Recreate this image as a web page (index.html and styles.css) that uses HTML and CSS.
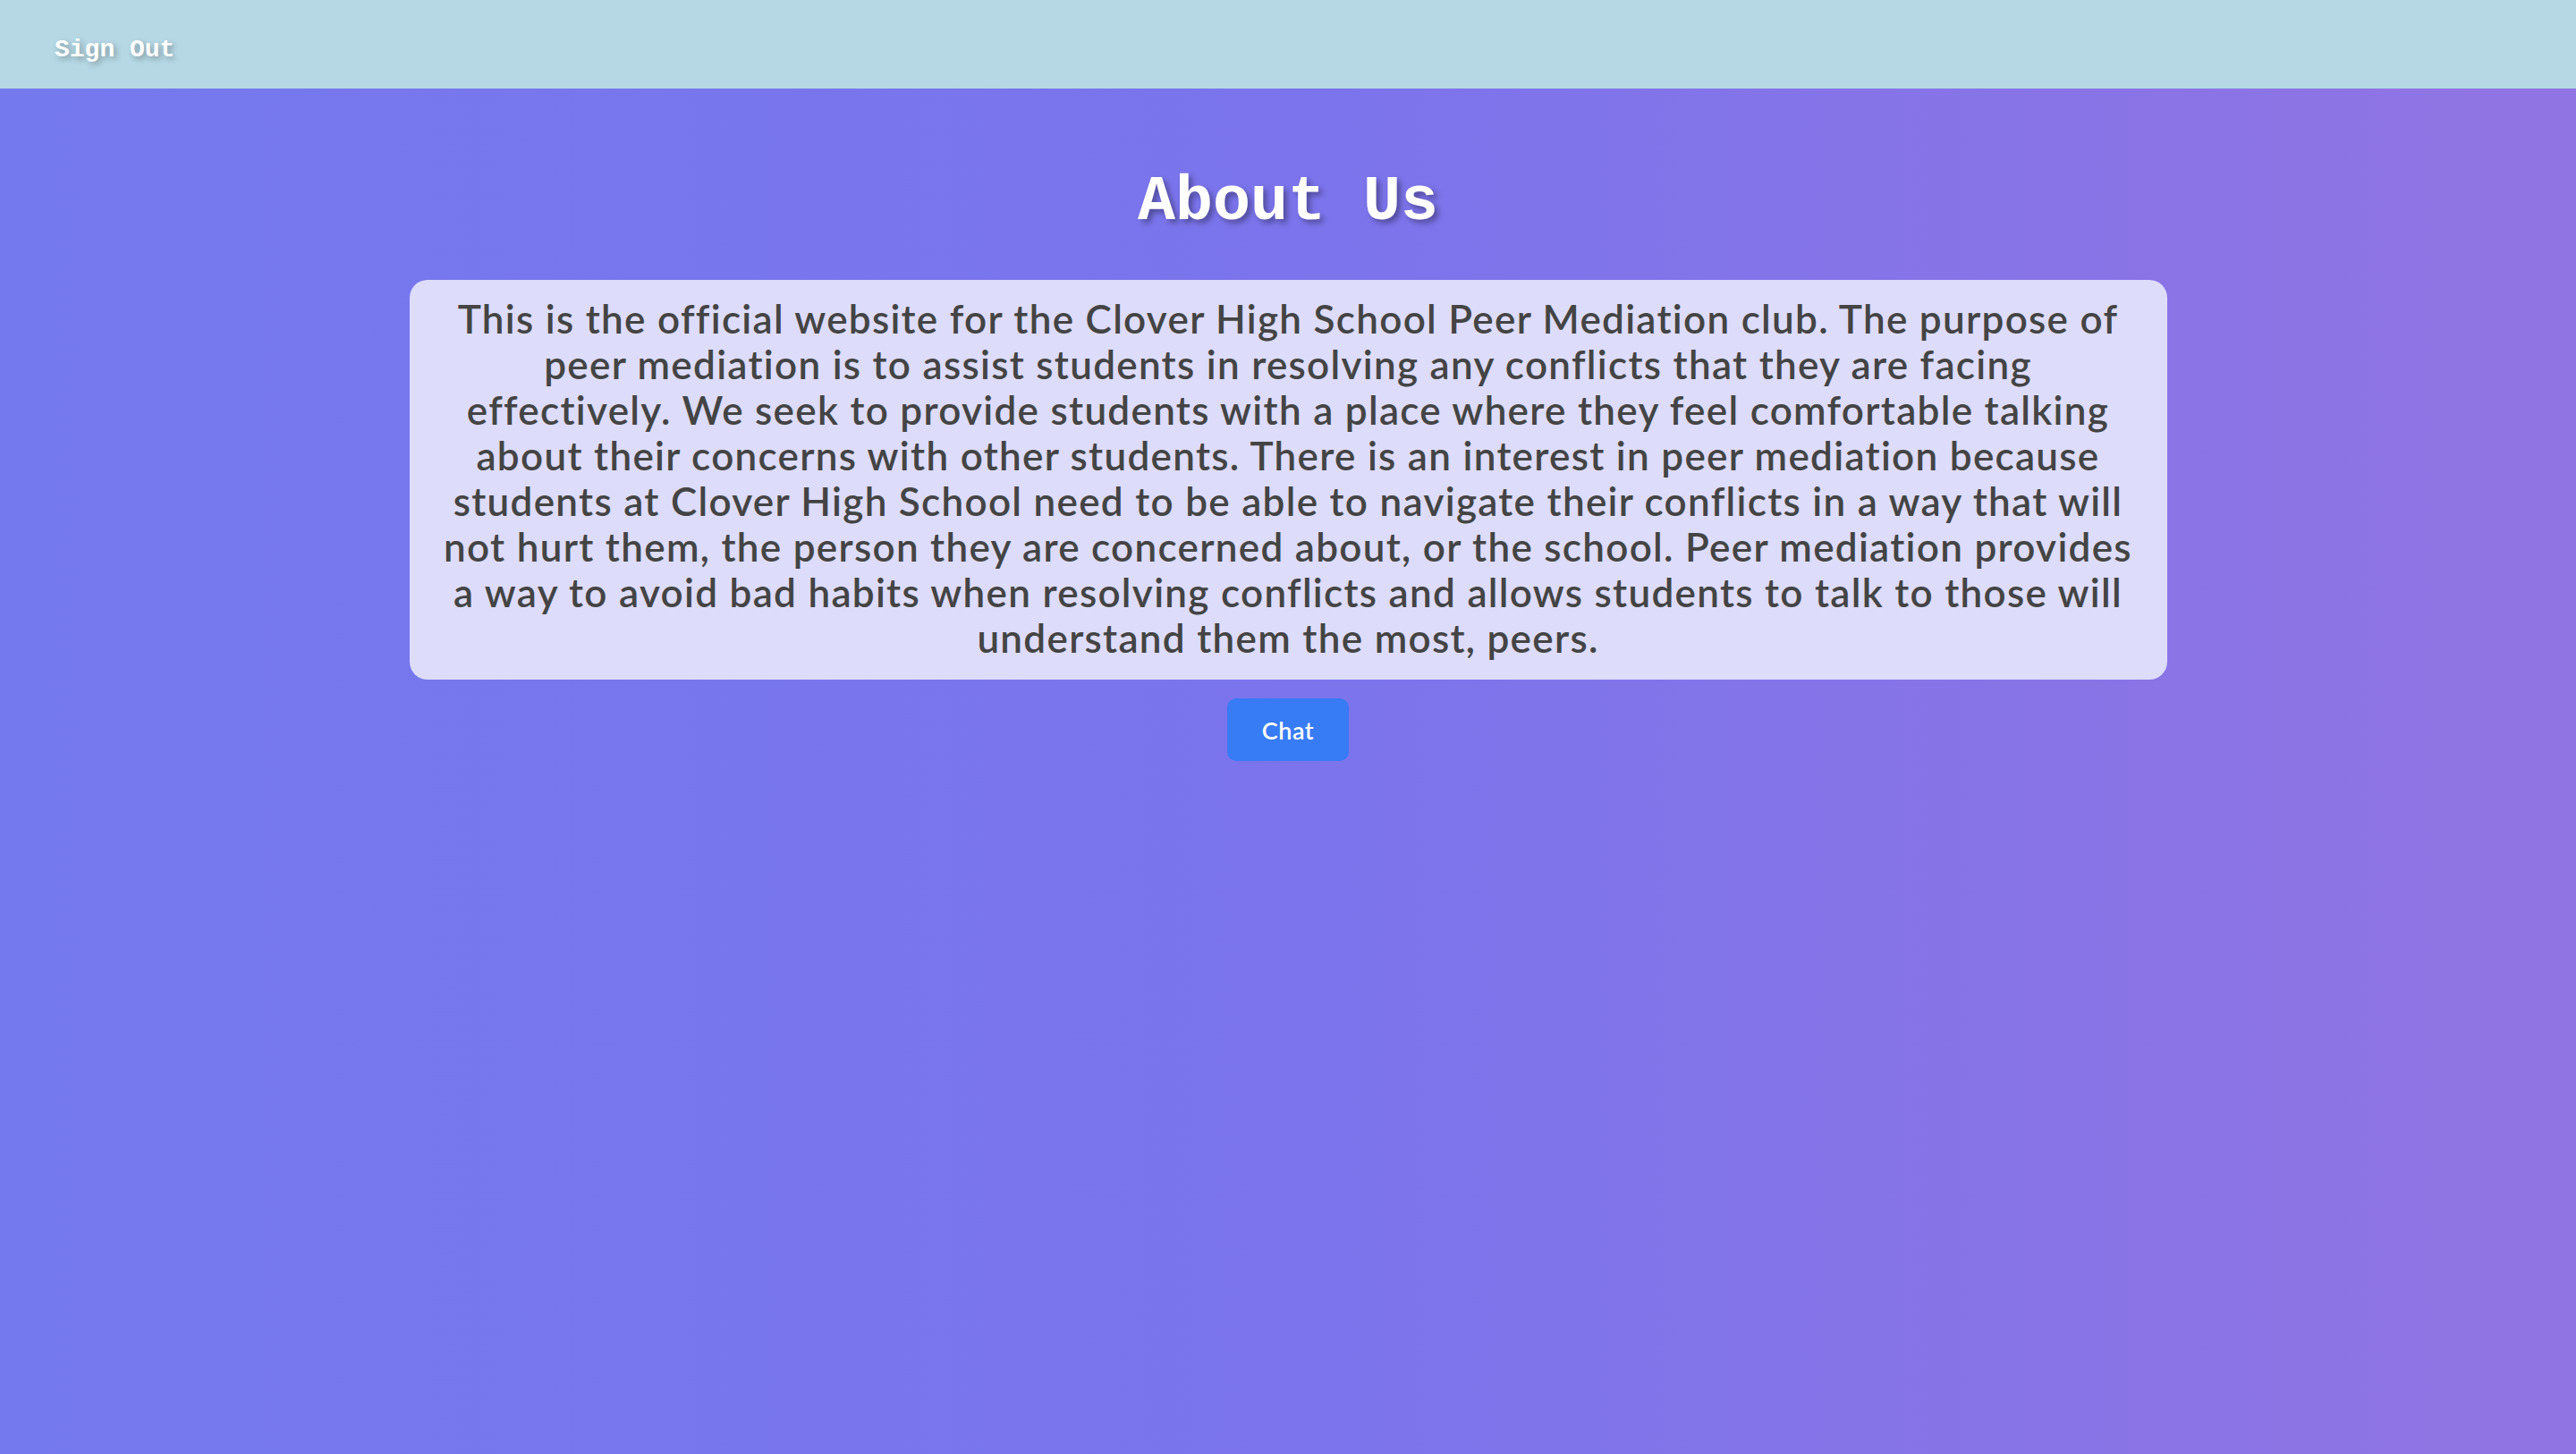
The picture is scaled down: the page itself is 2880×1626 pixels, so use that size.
FILE: index.html
```html
<!DOCTYPE html>
<html lang="en">
<head>
<meta charset="utf-8">
<title>About Us</title>
<link rel="stylesheet" href="styles.css">
</head>
<body>
<header class="topbar">
  <a class="signout" href="#">Sign Out</a>
</header>
<main class="content">
  <h1 class="title">About Us</h1>
  <div class="card">
    <p class="about-text">This is the official website for the Clover High School Peer Mediation club. The purpose of<br>
    peer mediation is to assist students in resolving any conflicts that they are facing<br>
    effectively. We seek to provide students with a place where they feel comfortable talking<br>
    about their concerns with other students. There is an interest in peer mediation because<br>
    students at Clover High School need to be able to navigate their conflicts in a way that will<br>
    not hurt them, the person they are concerned about, or the school. Peer mediation provides<br>
    a way to avoid bad habits when resolving conflicts and allows students to talk to those will<br>
    understand them the most, peers.</p>
  </div>
  <button class="chat-btn" type="button">Chat</button>
</main>
</body>
</html>
```

FILE: styles.css
```css
html, body {
  margin: 0;
  padding: 0;
  height: 100%;
}

body {
  min-height: 100vh;
  background: linear-gradient(to right, #7579ee, #7b74ec 50%, #9174e3);
  font-family: "Lato", "Open Sans", sans-serif;
}

.topbar {
  height: 99px;
  background: #b5d8e4;
  display: flex;
  align-items: center;
  padding-left: 61px;
}

.signout {
  font-family: "Liberation Mono", "Courier New", monospace;
  font-weight: bold;
  font-size: 28px;
  color: #ffffff;
  text-decoration: none;
  text-shadow: 3px 3px 6px rgba(0, 0, 0, 0.3);
  margin-top: 12px;
}

.content {
  display: flex;
  flex-direction: column;
  align-items: center;
}

.title {
  margin: 88px 0 0;
  font-family: "Liberation Mono", "Courier New", monospace;
  font-weight: bold;
  font-size: 70px;
  line-height: 80px;
  color: #ffffff;
  text-shadow: 4px 4px 6px rgba(0, 0, 0, 0.35);
}

.card {
  margin-top: 46px;
  width: 1965px;
  box-sizing: border-box;
  padding: 18px 16px 21px;
  background: #dddcfa;
  border-radius: 20px;
}

.about-text {
  margin: 0;
  text-align: center;
  font-size: 44px;
  line-height: 51px;
  letter-spacing: 1.3px;
  color: #444444;
  font-weight: 600;
}

.chat-btn {
  margin-top: 21px;
  width: 136px;
  height: 70px;
  border: none;
  border-radius: 10px;
  background: #377bf5;
  color: #ffffff;
  font-family: "Lato", "Open Sans", sans-serif;
  font-size: 27px;
  font-weight: 600;
  letter-spacing: 0.5px;
  cursor: pointer;
}
```
